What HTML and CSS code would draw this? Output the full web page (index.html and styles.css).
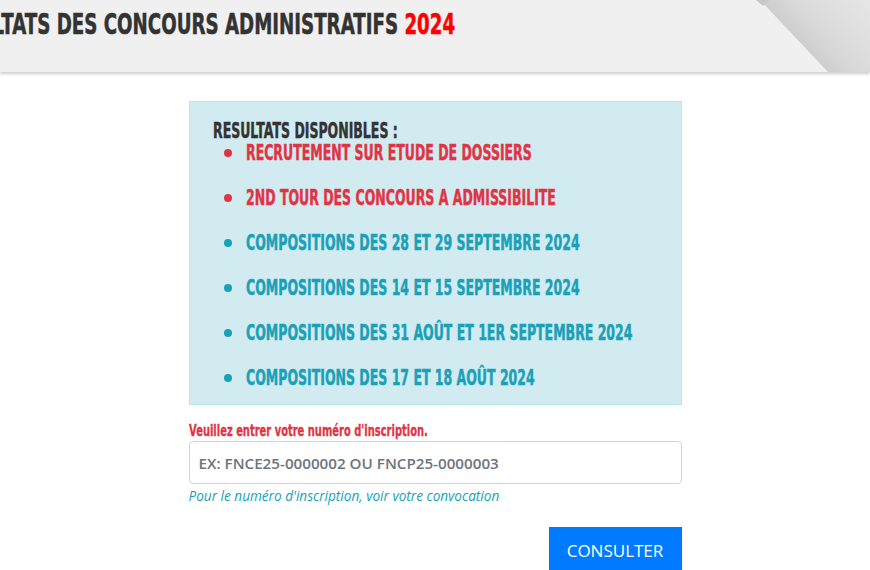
FILE: index.html
```html
<!DOCTYPE html>
<html lang="fr">
<head>
<meta charset="utf-8">
<title>Résultats des concours administratifs 2024</title>
<link rel="stylesheet" href="styles.css">
</head>
<body>
<header class="top">
  <div class="fold"></div>
  <div class="fold-tip"></div>
  <div class="title-row">
    <h1 class="title">RESULTATS DES CONCOURS ADMINISTRATIFS <span class="year">2024</span></h1>
  </div>
</header>
<main class="wrap">
  <section class="info">
    <h2 class="info-title"><span class="cond">RESULTATS DISPONIBLES :</span></h2>
    <ul class="list">
      <li class="red"><span class="cond">RECRUTEMENT SUR ETUDE DE DOSSIERS</span></li>
      <li class="red"><span class="cond">2ND TOUR DES CONCOURS A ADMISSIBILITE</span></li>
      <li class="teal"><span class="cond">COMPOSITIONS DES 28 ET 29 SEPTEMBRE 2024</span></li>
      <li class="teal"><span class="cond">COMPOSITIONS DES 14 ET 15 SEPTEMBRE 2024</span></li>
      <li class="teal"><span class="cond">COMPOSITIONS DES 31 AOÛT ET 1ER SEPTEMBRE 2024</span></li>
      <li class="teal"><span class="cond">COMPOSITIONS DES 17 ET 18 AOÛT 2024</span></li>
    </ul>
  </section>
  <form class="form">
    <label class="label" for="num"><span class="cond-label">Veuillez entrer votre numéro d'inscription.</span></label>
    <input class="input" id="num" type="text" placeholder="EX: FNCE25-0000002 OU FNCP25-0000003">
    <p class="help">Pour le numéro d'inscription, voir votre convocation</p>
    <div class="actions"><button class="btn" type="button">CONSULTER</button></div>
  </form>
</main>
</body>
</html>
```
FILE: styles.css
```css
html, body { margin: 0; padding: 0; background: #fff; overflow: hidden; }
body { font-family: "Open Sans", "Liberation Sans", sans-serif; }

.top {
  position: relative;
  height: 72px;
  background: #f0f0f0;
  box-shadow: 0 2px 3px rgba(0,0,0,0.2);
  overflow: hidden;
}
.fold {
  position: absolute;
  top: 0; left: 0; right: 0; bottom: 0;
  background: linear-gradient(46.6deg, #cdcdcd 88%, #dadada 92%, #e6e6e6 100%);
  clip-path: polygon(760px 0, 870px 0, 870px 72px, 828px 72px);
}
.fold-tip {
  position: absolute;
  top: 0; left: 0; right: 0; bottom: 0;
  background: #c8c8c8;
  clip-path: polygon(756px 0, 770px 0, 763px 6px);
}
.title-row {
  position: relative;
  width: 455px;
  display: flex;
  justify-content: flex-end;
  padding-top: 9px;
}
.title {
  flex: none;
  margin: 0;
  font-family: "DejaVu Sans", sans-serif;
  font-weight: bold;
  font-size: 29px;
  line-height: 30px;
  color: #333;
  white-space: nowrap;
  -webkit-text-stroke: 0.6px currentColor;
  transform: scaleX(0.628);
  transform-origin: right center;
}
.year { color: #ff0000; }

.wrap { width: 493px; margin: 0 auto; }

.info {
  margin-top: 29px;
  background: #d1ebf1;
  border: 1px solid #bee5eb;
  padding: 18px 23px 15px;
}
.cond {
  display: inline-block;
  white-space: nowrap;
  -webkit-text-stroke: 0.5px currentColor;
  transform: scaleX(0.61);
  transform-origin: left center;
}
.info-title {
  margin: 0;
  font-family: "DejaVu Sans", sans-serif;
  font-weight: bold;
  font-size: 20.5px;
  line-height: 22px;
  color: #333;
  white-space: nowrap;
}
.list {
  margin: 0;
  padding-left: 33px;
  list-style: none;
  font-family: "DejaVu Sans", sans-serif;
  font-weight: bold;
  font-size: 20.5px;
  line-height: 22px;
}
.list li { margin-bottom: 23px; white-space: nowrap; }
.list li:last-child { margin-bottom: 0; }
.list li::before {
  content: "";
  display: inline-block;
  width: 8px;
  height: 8px;
  border-radius: 50%;
  background: currentColor;
  margin: 0 14px 0 -22px;
  vertical-align: 3px;
}
.red { color: #e03444; }
.teal { color: #1aa1b8; }

.form { margin-top: 17px; }
.label {
  display: block;
  font-family: "DejaVu Sans", sans-serif;
  font-weight: bold;
  font-size: 15px;
  line-height: 18px;
  color: #e03444;
  white-space: nowrap;
}
.cond-label {
  display: inline-block;
  white-space: nowrap;
  -webkit-text-stroke: 0.3px currentColor;
  transform: scaleX(0.662);
  transform-origin: left center;
}
.input {
  display: block;
  box-sizing: border-box;
  width: 100%;
  height: 43px;
  margin-top: 1px;
  padding: 0 9px;
  border: 1px solid #ced4da;
  border-radius: 4px;
  font-family: "Open Sans", sans-serif;
  font-size: 15.2px;
  font-weight: 600;
}
.input::placeholder { color: #6c757d; opacity: 1; }
.help {
  margin: 3px 0 0;
  font-family: "Open Sans", sans-serif;
  font-style: italic;
  font-size: 13.6px;
  line-height: 18px;
  color: #17a2b8;
}
.actions { display: flex; justify-content: flex-end; margin-top: 22px; }
.btn {
  width: 133px;
  height: 46px;
  border: 0;
  background: #007bff;
  color: #fff;
  font-family: "Open Sans", sans-serif;
  font-size: 17px;
  padding: 0;
}
```
